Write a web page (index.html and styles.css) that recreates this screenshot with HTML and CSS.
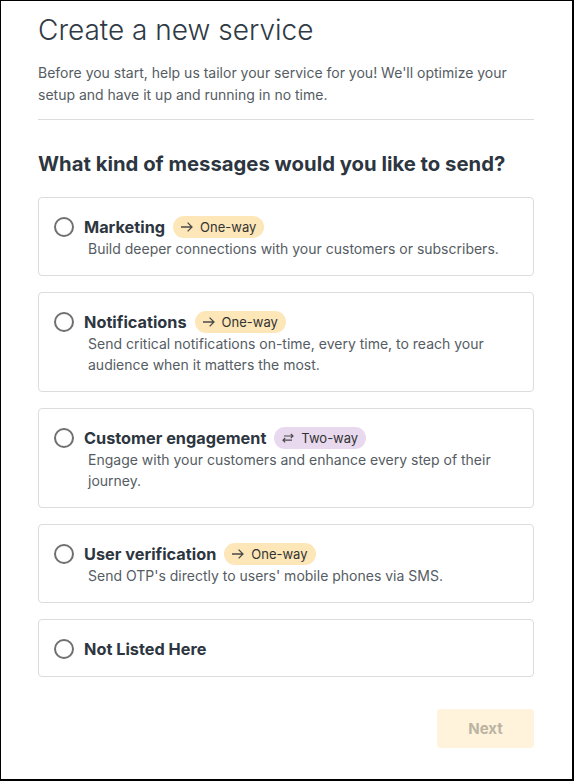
FILE: index.html
```html
<!DOCTYPE html>
<html>
<head>
<meta charset="utf-8">
<link rel="stylesheet" href="styles.css">
</head>
<body>
<div class="frame">
  <h1 class="title">Create a new service</h1>
  <p class="intro">Before you start, help us tailor your service for you! We'll optimize your setup and have it up and running in no time.</p>
  <hr class="divider">
  <h2 class="question">What kind of messages would you like to send?</h2>
  <div class="options">
    <label class="card">
      <span class="radio"></span>
      <div class="card-body">
        <div class="card-head"><span class="card-title">Marketing</span><span class="badge one"><svg class="ico" viewBox="0 0 16 16"><path d="M2 8h11M8.6 3.6L13 8l-4.4 4.4" fill="none" stroke="currentColor" stroke-width="1.3"/></svg>One-way</span></div>
        <div class="card-desc">Build deeper connections with your customers or subscribers.</div>
      </div>
    </label>
    <label class="card">
      <span class="radio"></span>
      <div class="card-body">
        <div class="card-head"><span class="card-title">Notifications</span><span class="badge one"><svg class="ico" viewBox="0 0 16 16"><path d="M2 8h11M8.6 3.6L13 8l-4.4 4.4" fill="none" stroke="currentColor" stroke-width="1.3"/></svg>One-way</span></div>
        <div class="card-desc">Send critical notifications on-time, every time, to reach your audience when it matters the most.</div>
      </div>
    </label>
    <label class="card">
      <span class="radio"></span>
      <div class="card-body">
        <div class="card-head"><span class="card-title">Customer engagement</span><span class="badge two"><svg class="ico" viewBox="0 0 16 16"><path d="M4 6h9M10.8 3.8L13 6l-2.2 2.2M12 10.2h-9M5.2 8L3 10.2l2.2 2.2" fill="none" stroke="currentColor" stroke-width="1.2"/></svg>Two-way</span></div>
        <div class="card-desc">Engage with your customers and enhance every step of their journey.</div>
      </div>
    </label>
    <label class="card">
      <span class="radio"></span>
      <div class="card-body">
        <div class="card-head"><span class="card-title">User verification</span><span class="badge one"><svg class="ico" viewBox="0 0 16 16"><path d="M2 8h11M8.6 3.6L13 8l-4.4 4.4" fill="none" stroke="currentColor" stroke-width="1.3"/></svg>One-way</span></div>
        <div class="card-desc">Send OTP's directly to users' mobile phones via SMS.</div>
      </div>
    </label>
    <label class="card">
      <span class="radio"></span>
      <div class="card-body">
        <div class="card-head"><span class="card-title">Not Listed Here</span></div>
      </div>
    </label>
  </div>
  <div class="actions">
    <button class="next" disabled>Next</button>
  </div>
</div>
</body>
</html>
```

FILE: styles.css
```css
html, body {
  margin: 0;
  padding: 0;
  background: #fff;
}
body {
  font-family: Inter, "Noto Sans", sans-serif;
  color: #2f3a45;
}
.frame {
  box-sizing: border-box;
  width: 574px;
  height: 781px;
  border: 1px solid #000;
  border-right-width: 2px;
  border-bottom-width: 2px;
  padding: 11px 38px 0 37px;
}
.title {
  margin: 0;
  font-size: 28px;
  line-height: 36px;
  font-weight: 300;
  color: #2f3a45;
}
.intro {
  margin: 14px 0 0;
  font-size: 14px;
  line-height: 22px;
  color: #555c63;
}
.divider {
  margin: 13px 0 0;
  border: 0;
  border-top: 1px solid #dcdcdc;
  height: 0;
}
.question {
  margin: 30px 0 0;
  font-size: 20.3px;
  line-height: 28px;
  font-weight: 700;
  color: #2d3640;
}
.options {
  margin-top: 19px;
  display: flex;
  flex-direction: column;
  gap: 16px;
}
.card {
  display: flex;
  align-items: flex-start;
  gap: 10px;
  border: 1px solid #dcdcdc;
  border-radius: 4px;
  padding: 18px 16px 16px 15px;
}
.radio {
  flex: none;
  box-sizing: border-box;
  width: 20px;
  height: 20px;
  border: 2px solid #707070;
  border-radius: 50%;
  margin-top: 1px;
}
.card-body {
  display: flex;
  flex-direction: column;
}
.card-head {
  display: flex;
  align-items: center;
  gap: 8px;
  height: 22px;
}
.card-title {
  font-size: 16.3px;
  font-weight: 700;
  color: #2d3640;
}
.badge {
  display: inline-flex;
  align-items: center;
  gap: 5px;
  height: 22px;
  padding: 0 8px 0 6px;
  border-radius: 11px;
  font-size: 13px;
  color: #333;
}
.badge.one { background: #fde7b8; }
.badge.two { background: #e8d9ee; }
.ico {
  width: 16px;
  height: 16px;
  color: #4a4a4a;
}
.card-desc {
  padding-left: 4px;
  font-size: 14px;
  line-height: 21px;
  color: #555c63;
}
.actions {
  display: flex;
  justify-content: flex-end;
  margin-top: 32px;
}
.next {
  width: 97px;
  height: 39px;
  border: 0;
  border-radius: 4px;
  background: #fff3dc;
  color: #bcb4a2;
  font-family: Inter, "Noto Sans", sans-serif;
  font-size: 15px;
  font-weight: 700;
}
```
